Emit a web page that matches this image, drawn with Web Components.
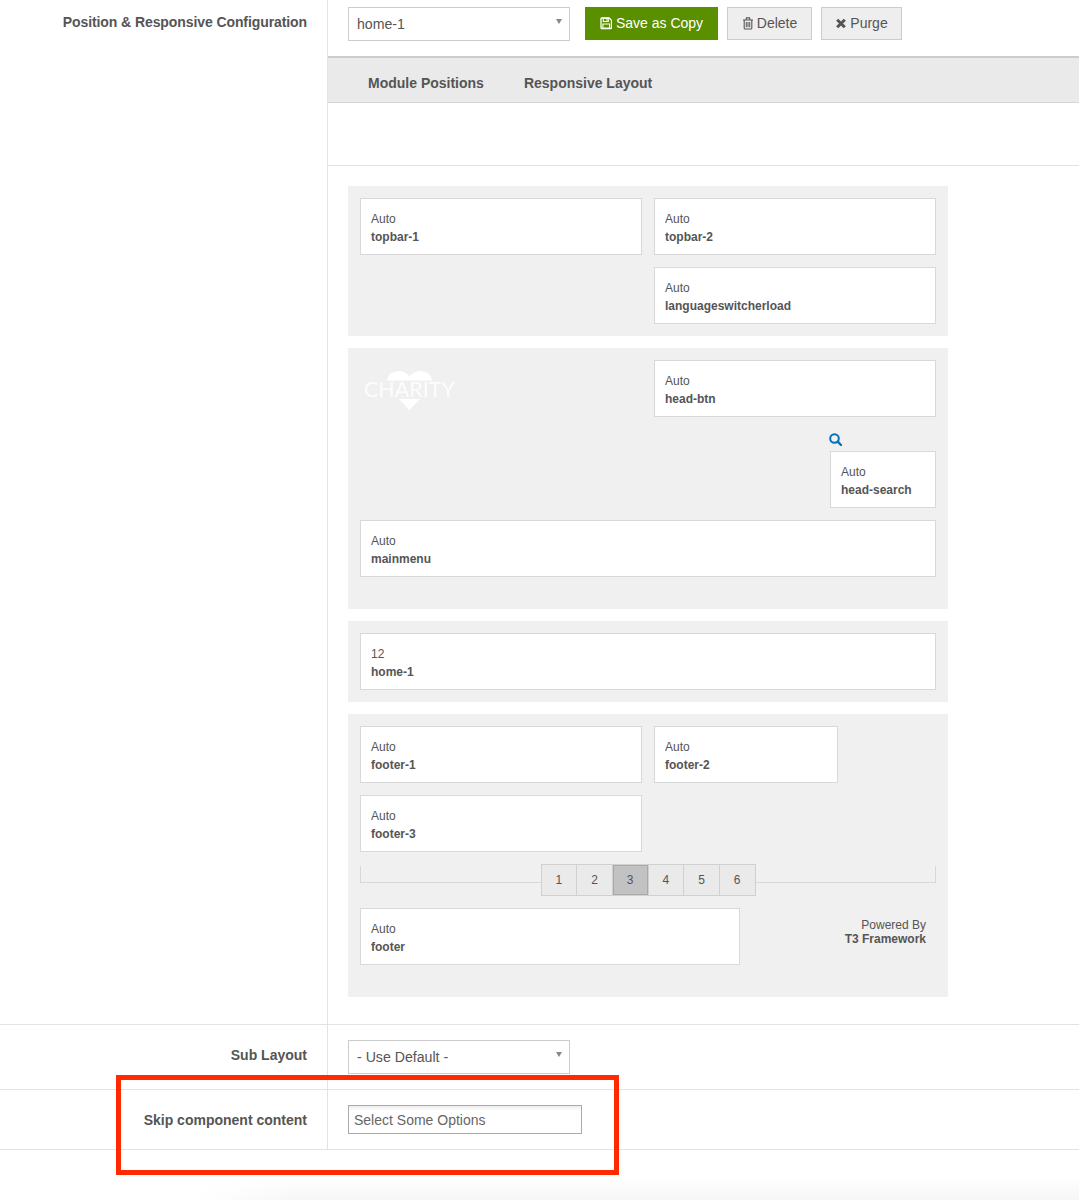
<!DOCTYPE html>
<html lang="en">
<head>
<meta charset="utf-8">
<title>Position &amp; Responsive Configuration</title>
<style>
  html, body { margin: 0; padding: 0; background: #fff; }
  body { font-family: "Liberation Sans", Arial, sans-serif; font-size: 14px; color: #555; position: relative; height: 1200px; overflow: hidden; }
  .toolbar { display: flex; align-items: flex-start; padding: 7px 0 0 20px; height: 56px; box-sizing: border-box; }
  .layout { padding: 20px 0 27px 20px; }
</style>
</head>
<body>
  <t3-form-row label="Position &amp; Responsive Configuration" style="--label-spacing:-0.09px">
    <div class="toolbar">
      <t3-select value="home-1"></t3-select>
      <t3-btn kind="primary" icon="save" style="margin-left:15px;width:133px">Save as Copy</t3-btn>
      <t3-btn icon="trash" style="margin-left:9px;width:85px">Delete</t3-btn>
      <t3-btn icon="times" style="margin-left:9px;width:81px">Purge</t3-btn>
    </div>
    <t3-tabs></t3-tabs>
    <div class="layout">
      <t3-block>
        <t3-pos span="Auto" name="topbar-1" style="width:282px"></t3-pos>
        <t3-pos span="Auto" name="topbar-2" style="width:282px"></t3-pos>
        <div style="width:282px"></div>
        <t3-pos span="Auto" name="languageswitcherload" style="width:282px"></t3-pos>
      </t3-block>
      <t3-block bottom="32">
        <t3-logo style="width:282px"></t3-logo>
        <t3-pos span="Auto" name="head-btn" style="width:282px"></t3-pos>
        <t3-search-pos style="width:100%"></t3-search-pos>
        <t3-pos span="Auto" name="mainmenu" style="width:100%"></t3-pos>
      </t3-block>
      <t3-block>
        <t3-pos span="12" name="home-1" style="width:100%"></t3-pos>
      </t3-block>
      <t3-block bottom="32">
        <t3-pos span="Auto" name="footer-1" style="width:282px"></t3-pos>
        <t3-pos span="Auto" name="footer-2" style="width:184px"></t3-pos>
        <t3-pos span="Auto" name="footer-3" style="width:282px;margin-right:294px"></t3-pos>
        <t3-ruler active="3" style="width:100%"></t3-ruler>
        <t3-pos span="Auto" name="footer" style="width:380px"></t3-pos>
        <t3-powered style="width:184px"></t3-powered>
      </t3-block>
    </div>
  </t3-form-row>
  <t3-form-row label="Sub Layout" pad="21">
    <t3-select value="- Use Default -" style="margin:15px 0 15px 20px"></t3-select>
  </t3-form-row>
  <t3-form-row label="Skip component content" pad="21">
    <t3-chosen placeholder="Select Some Options" style="margin:15px 0 15px 20px"></t3-chosen>
  </t3-form-row>
  <t3-annotation></t3-annotation>
  <t3-page-shadow></t3-page-shadow>

<script>
// Label on the left, control on the right
class T3FormRow extends HTMLElement {
    constructor() {
        super();
        this.attachShadow({ mode: 'open' });
    }

    connectedCallback() {
        const pad = this.getAttribute('pad');
        this.shadowRoot.innerHTML = `
            <style>
                :host {
                    display: grid;
                    grid-template-columns: 328px 1fr;
                    border-bottom: 1px solid #e3e3e3;
                }
                .label {
                    box-sizing: border-box;
                    border-right: 1px solid #e3e3e3;
                    padding: ${pad ? pad : 13}px 20px 0 0;
                    text-align: right;
                    font-weight: bold;
                    font-size: 14px;
                    line-height: 18px;
                    letter-spacing: var(--label-spacing, 0);
                    color: #555;
                }
            </style>
            <div class="label"></div>
            <div class="control"><slot></slot></div>
        `;
        this.shadowRoot.querySelector('.label').textContent = this.getAttribute('label');
    }
}

class T3Select extends HTMLElement {
    constructor() {
        super();
        this.attachShadow({ mode: 'open' });
    }

    connectedCallback() {
        this.shadowRoot.innerHTML = `
            <style>
                :host {
                    display: block;
                    box-sizing: border-box;
                    width: 222px;
                    height: 34px;
                    border: 1px solid #ccc;
                    background: #fff;
                    position: relative;
                    padding-left: 8px;
                    font-size: 14.15px;
                    line-height: 33px;
                    color: #555;
                }
                .arrow {
                    position: absolute;
                    right: 7px;
                    top: 11px;
                    width: 0;
                    height: 0;
                    border-left: 3.5px solid transparent;
                    border-right: 3.5px solid transparent;
                    border-top: 5px solid #888;
                }
            </style>
            <span></span><i class="arrow"></i>
        `;
        this.shadowRoot.querySelector('span').textContent = this.getAttribute('value');
    }
}

const ICONS = {
    save: '<path d="M1.500 1h7.700L11.500 3.300v7.700a.5.5 0 0 1-.5.5H1.500a.5.5 0 0 1-.5-.5V1.500a.5.5 0 0 1 .5-.5z" fill="none" stroke="currentColor" stroke-width="1.300"/><path d="M3.300 1.200h5v3.300h-5zM2.900 7h6.700v4.400H2.900z" fill="none" stroke="currentColor" stroke-width="1.100"/><path d="M6.400 1.800h1.100v2H6.400z" fill="currentColor"/>',
    trash: '<path d="M4.200 2.600V1.400c0-.3.2-.5.5-.5h2.600c.3 0 .5.2.5.5v1.200M1 3h10M2.200 3v7.900c0 .7.4 1.100 1 1.100h5.600c.6 0 1-.4 1-1.100V3" fill="none" stroke="currentColor" stroke-width="1.100"/><path d="M4.300 5v5.200M6 5v5.200M7.700 5v5.200" stroke="currentColor" stroke-width="1"/>',
    times: '<path d="M2.200 2.700l7.600 7.600M9.800 2.700l-7.600 7.600" fill="none" stroke="currentColor" stroke-width="3"/>'
};

class T3Btn extends HTMLElement {
    constructor() {
        super();
        this.attachShadow({ mode: 'open' });
    }

    connectedCallback() {
        const primary = this.getAttribute('kind') === 'primary';
        this.shadowRoot.innerHTML = `
            <style>
                :host {
                    display: flex;
                    align-items: center;
                    justify-content: center;
                    box-sizing: border-box;
                    height: 33px;
                    gap: ${primary ? 4 : 3}px;
                    font-size: 14px;
                    border: 1px solid ${primary ? '#5a8f00' : '#ccc'};
                    background: ${primary ? '#5a8f00' : '#eee'};
                    color: ${primary ? '#fff' : '#555'};
                    padding-bottom: 1px;
                }
                svg { width: 12px; height: 13px; flex: none; }
            </style>
            <svg viewBox="0 0 12 13">${ICONS[this.getAttribute('icon')]}</svg>
            <slot></slot>
        `;
    }
}

class T3Tabs extends HTMLElement {
    constructor() {
        super();
        this.attachShadow({ mode: 'open' });
    }

    connectedCallback() {
        this.shadowRoot.innerHTML = `
            <style>
                :host {
                    display: block;
                    height: 110px;
                    box-sizing: border-box;
                    border-bottom: 1px solid #e3e3e3;
                }
                nav {
                    display: flex;
                    gap: 40px;
                    box-sizing: border-box;
                    height: 47px;
                    padding: 17px 0 0 40px;
                    background: #eaeaea;
                    border-top: 2px solid #ccc;
                    border-bottom: 1px solid #d6d6d6;
                    font-size: 14px;
                    line-height: 17px;
                    font-weight: bold;
                    color: #555;
                }
            </style>
            <nav><span>Module Positions</span><span>Responsive Layout</span></nav>
        `;
    }
}

class T3Block extends HTMLElement {
    constructor() {
        super();
        this.attachShadow({ mode: 'open' });
    }

    connectedCallback() {
        const bottom = this.getAttribute('bottom') || 12;
        this.shadowRoot.innerHTML = `
            <style>
                :host {
                    display: flex;
                    flex-wrap: wrap;
                    gap: 12px;
                    box-sizing: border-box;
                    width: 600px;
                    padding: 12px 12px ${bottom}px;
                    margin-bottom: 12px;
                    background: #f0f0f0;
                }
                :host(:last-child) { margin-bottom: 0; }
            </style>
            <slot></slot>
        `;
    }
}

// One module position
class T3Pos extends HTMLElement {
    constructor() {
        super();
        this.attachShadow({ mode: 'open' });
    }

    connectedCallback() {
        this.shadowRoot.innerHTML = `
            <style>
                :host {
                    display: block;
                    box-sizing: border-box;
                    height: 57px;
                    padding: 11px 10px 0;
                    background: #fff;
                    border: 1px solid #d8d8d8;
                    font-size: 12px;
                    line-height: 18px;
                    color: #555;
                }
                b { display: block; }
            </style>
            <div></div><b></b>
        `;
        this.shadowRoot.querySelector('div').textContent = this.getAttribute('span');
        this.shadowRoot.querySelector('b').textContent = this.getAttribute('name');
    }
}

class T3Logo extends HTMLElement {
    constructor() {
        super();
        this.attachShadow({ mode: 'open' });
    }

    connectedCallback() {
        this.shadowRoot.innerHTML = `
            <style>
                :host { display: block; height: 57px; position: relative; }
                svg { position: absolute; left: 27px; top: 11px; width: 45px; height: 39px; }
                span {
                    position: absolute;
                    left: 4px;
                    top: 16px;
                    font-family: Lato, sans-serif;
                    font-weight: 400;
                    font-size: 21.5px;
                    line-height: 27px;
                    color: #fff;
                    opacity: .85;
                }
            </style>
            <svg viewBox="0 0 45 39">
                <path fill="#fff" d="M0 9.500C1 3.500 5.500 0 11.500 0c5 0 9 2.500 11 5.500 2-3 6-5.500 11-5.500 6 0 10.500 3.500 11.500 9.500z"/>
                <path fill="#fff" d="M12 28h21L22.500 39z"/>
            </svg>
            <span>CHARITY</span>
        `;
    }
}

class T3SearchPos extends HTMLElement {
    constructor() {
        super();
        this.attachShadow({ mode: 'open' });
    }

    connectedCallback() {
        this.shadowRoot.innerHTML = `
            <style>
                :host {
                    display: flex;
                    flex-direction: column;
                    align-items: flex-end;
                    margin-top: 4px;
                }
                .wrap { width: 106px; }
                svg { display: block; width: 13px; height: 13px; margin: 0 0 5px -1px; color: #0071bc; }
            </style>
            <div class="wrap">
                <svg viewBox="0 0 13 13">
                    <circle cx="5.500" cy="5.500" r="4.300" fill="none" stroke="currentColor" stroke-width="2"/>
                    <path d="M8.700 8.700L12 12" stroke="currentColor" stroke-width="2.400" stroke-linecap="round"/>
                </svg>
                <t3-pos span="Auto" name="head-search"></t3-pos>
            </div>
        `;
    }
}

// Screen-size ruler with the numbered layout buttons
class T3Ruler extends HTMLElement {
    constructor() {
        super();
        this.attachShadow({ mode: 'open' });
    }

    connectedCallback() {
        const active = this.getAttribute('active');
        const cells = [1, 2, 3, 4, 5, 6].map(n =>
            `<span class="${String(n) === active ? 'on' : ''}">${n}</span>`).join('');
        this.shadowRoot.innerHTML = `
            <style>
                :host { display: flex; height: 32px; font-size: 12px; color: #555; }
                .line {
                    flex: 1;
                    box-sizing: border-box;
                    height: 17px;
                    margin-top: 2px;
                    border-bottom: 1px solid #d8d8d8;
                }
                .line.l { border-left: 1px solid #d8d8d8; }
                .line.r { border-right: 1px solid #d8d8d8; }
                .cells { display: flex; width: 215px; box-sizing: border-box; border: 1px solid #d0d0d0; background: #eaeaea; }
                .cells span {
                    flex: 1;
                    text-align: center;
                    line-height: 30px;
                    border-left: 1px solid #d0d0d0;
                }
                .cells span:first-child { border-left: 0; }
                .cells .on { background: #c2c2c2; box-shadow: 0 0 0 1px #aaa inset; }
            </style>
            <div class="line l"></div>
            <div class="cells">${cells}</div>
            <div class="line r"></div>
        `;
    }
}

class T3Powered extends HTMLElement {
    constructor() {
        super();
        this.attachShadow({ mode: 'open' });
    }

    connectedCallback() {
        this.shadowRoot.innerHTML = `
            <style>
                :host {
                    display: block;
                    margin-left: auto;
                    box-sizing: border-box;
                    padding: 10px 10px 0 0;
                    text-align: right;
                    font-size: 12px;
                    line-height: 14px;
                    color: #555;
                }
                b { display: block; }
            </style>
            <div>Powered By</div><b>T3 Framework</b>
        `;
    }
}

class T3Chosen extends HTMLElement {
    constructor() {
        super();
        this.attachShadow({ mode: 'open' });
    }

    connectedCallback() {
        this.shadowRoot.innerHTML = `
            <style>
                :host {
                    display: block;
                    box-sizing: border-box;
                    width: 234px;
                    height: 29px;
                    padding-left: 5px;
                    border: 1px solid #aaa;
                    background: linear-gradient(#eee 0, #fff 5px);
                    font-size: 14px;
                    line-height: 28px;
                    color: #666;
                }
            </style>
            <span></span>
        `;
        this.shadowRoot.querySelector('span').textContent = this.getAttribute('placeholder');
    }
}

// Red frame drawn over the screenshot
class T3Annotation extends HTMLElement {
    constructor() {
        super();
        this.attachShadow({ mode: 'open' });
    }

    connectedCallback() {
        this.shadowRoot.innerHTML = `
            <style>
                :host {
                    position: absolute;
                    left: 116px;
                    top: 1075px;
                    width: 503px;
                    height: 100px;
                    box-sizing: border-box;
                    border: 5px solid #ff2a00;
                }
            </style>
        `;
    }
}

// Faint shadow along the bottom edge
class T3PageShadow extends HTMLElement {
    constructor() {
        super();
        this.attachShadow({ mode: 'open' });
    }

    connectedCallback() {
        this.shadowRoot.innerHTML = `
            <style>
                :host {
                    position: absolute;
                    left: 195px;
                    right: 0;
                    bottom: 0;
                    height: 22px;
                    background: linear-gradient(to top, #f6f6f6, rgba(246,246,246,0));
                    -webkit-mask-image: linear-gradient(to right, transparent, #000 110px);
                    mask-image: linear-gradient(to right, transparent, #000 110px);
                }
            </style>
        `;
    }
}

customElements.define('t3-form-row', T3FormRow);
customElements.define('t3-select', T3Select);
customElements.define('t3-btn', T3Btn);
customElements.define('t3-tabs', T3Tabs);
customElements.define('t3-block', T3Block);
customElements.define('t3-pos', T3Pos);
customElements.define('t3-logo', T3Logo);
customElements.define('t3-search-pos', T3SearchPos);
customElements.define('t3-ruler', T3Ruler);
customElements.define('t3-powered', T3Powered);
customElements.define('t3-chosen', T3Chosen);
customElements.define('t3-annotation', T3Annotation);
customElements.define('t3-page-shadow', T3PageShadow);
</script>
</body>
</html>
